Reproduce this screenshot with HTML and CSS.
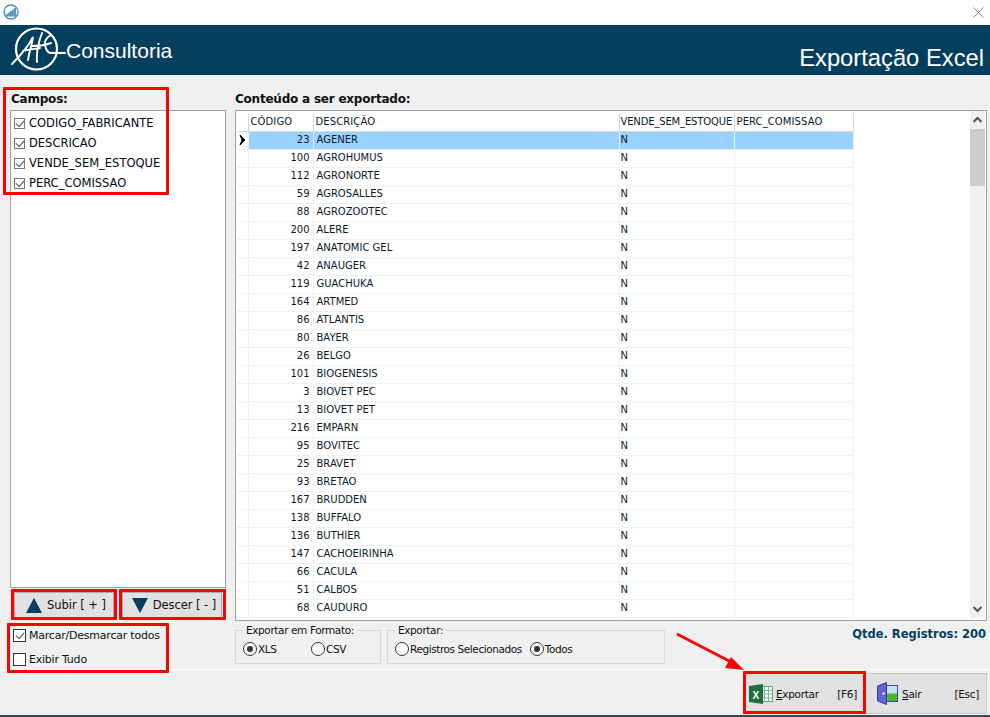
FILE: index.html
```html
<!DOCTYPE html>
<html lang="pt">
<head>
<meta charset="utf-8">
<title>Exportação Excel</title>
<link rel="stylesheet" href="styles.css">
</head>
<body>
<div class="app">
  <div class="titlebar">
    <svg class="appicon" width="16" height="16" viewBox="0 0 16 16"><circle cx="8" cy="8" r="7" fill="#fff" stroke="#3a93c4" stroke-width="1.300"/><path d="M4 12.500V10M6 12.500V8.500M8 12.500V7M10 12.500V5.500M12 12.500V4" stroke="#1c6ea4" stroke-width="1.400"/></svg>
    <svg class="closeicon" width="11" height="11" viewBox="0 0 11 11"><path d="M.5.5l10 10M10.500.5l-10 10" stroke="#8a8a8a" fill="none"/></svg>
  </div>
  <header class="header">
    <div class="brand">
      <svg class="logo" width="55" height="50" viewBox="0 0 55 50" fill="none" stroke="#fff" stroke-linecap="round"><circle cx="25.500" cy="24" r="20.500" stroke-width="2.200"/><path d="M1 39C9 31 17 22 22 12c-1 8-4 15-5 23M12 26c6-2 12-2 17-3M31 8c-3 8-6 18-5 29M21 21c8 0 14-1 19-3" stroke-width="1.900"/><path d="M40 10c-4 2-7 6-6 10 1 5 3 8 6 8h14" stroke-width="1.900"/></svg>
      <span class="brandname">Consultoria</span>
    </div>
    <h1 class="pagetitle">Exportação Excel</h1>
  </header>
  <main class="content">
    <section class="leftcol">
      <div class="label">Campos:</div>
      <ul class="fields">
        <li class="field"><span class="check flat on"></span>CODIGO_FABRICANTE</li>
        <li class="field"><span class="check flat on"></span>DESCRICAO</li>
        <li class="field"><span class="check flat on"></span>VENDE_SEM_ESTOQUE</li>
        <li class="field"><span class="check flat on"></span>PERC_COMISSAO</li>
      </ul>
      <div class="movebtns">
        <button class="movebtn"><span class="tri up"></span>Subir [ + ]</button>
        <button class="movebtn"><span class="tri down"></span>Descer [ - ]</button>
      </div>
      <div class="checks">
        <div class="checkrow"><span class="check on"></span>Marcar/Desmarcar todos</div>
        <div class="checkrow"><span class="check"></span>Exibir Tudo</div>
      </div>
    </section>
    <section class="rightcol">
      <div class="label">Conteúdo a ser exportado:</div>
      <div class="gridbox">
        <table class="grid">
          <colgroup><col class="c0"><col class="c1"><col class="c2"><col class="c3"><col class="c4"></colgroup>
          <thead><tr><th></th><th>CÓDIGO</th><th>DESCRIÇÃO</th><th>VENDE_SEM_ESTOQUE</th><th>PERC_COMISSAO</th></tr></thead>
          <tbody>
            <tr class="sel"><td class="ind"><svg width="8" height="10" viewBox="0 0 8 10"><path d="M1 0l5 5-5 5 2-5z" fill="#000" stroke="#000"/></svg></td><td class="num">23</td><td>AGENER</td><td>N</td><td></td></tr>
            <tr><td class="ind"></td><td class="num">100</td><td>AGROHUMUS</td><td>N</td><td></td></tr>
            <tr><td class="ind"></td><td class="num">112</td><td>AGRONORTE</td><td>N</td><td></td></tr>
            <tr><td class="ind"></td><td class="num">59</td><td>AGROSALLES</td><td>N</td><td></td></tr>
            <tr><td class="ind"></td><td class="num">88</td><td>AGROZOOTEC</td><td>N</td><td></td></tr>
            <tr><td class="ind"></td><td class="num">200</td><td>ALERE</td><td>N</td><td></td></tr>
            <tr><td class="ind"></td><td class="num">197</td><td>ANATOMIC GEL</td><td>N</td><td></td></tr>
            <tr><td class="ind"></td><td class="num">42</td><td>ANAUGER</td><td>N</td><td></td></tr>
            <tr><td class="ind"></td><td class="num">119</td><td>GUACHUKA</td><td>N</td><td></td></tr>
            <tr><td class="ind"></td><td class="num">164</td><td>ARTMED</td><td>N</td><td></td></tr>
            <tr><td class="ind"></td><td class="num">86</td><td>ATLANTIS</td><td>N</td><td></td></tr>
            <tr><td class="ind"></td><td class="num">80</td><td>BAYER</td><td>N</td><td></td></tr>
            <tr><td class="ind"></td><td class="num">26</td><td>BELGO</td><td>N</td><td></td></tr>
            <tr><td class="ind"></td><td class="num">101</td><td>BIOGENESIS</td><td>N</td><td></td></tr>
            <tr><td class="ind"></td><td class="num">3</td><td>BIOVET PEC</td><td>N</td><td></td></tr>
            <tr><td class="ind"></td><td class="num">13</td><td>BIOVET PET</td><td>N</td><td></td></tr>
            <tr><td class="ind"></td><td class="num">216</td><td>EMPARN</td><td>N</td><td></td></tr>
            <tr><td class="ind"></td><td class="num">95</td><td>BOVITEC</td><td>N</td><td></td></tr>
            <tr><td class="ind"></td><td class="num">25</td><td>BRAVET</td><td>N</td><td></td></tr>
            <tr><td class="ind"></td><td class="num">93</td><td>BRETAO</td><td>N</td><td></td></tr>
            <tr><td class="ind"></td><td class="num">167</td><td>BRUDDEN</td><td>N</td><td></td></tr>
            <tr><td class="ind"></td><td class="num">138</td><td>BUFFALO</td><td>N</td><td></td></tr>
            <tr><td class="ind"></td><td class="num">136</td><td>BUTHIER</td><td>N</td><td></td></tr>
            <tr><td class="ind"></td><td class="num">147</td><td>CACHOEIRINHA</td><td>N</td><td></td></tr>
            <tr><td class="ind"></td><td class="num">66</td><td>CACULA</td><td>N</td><td></td></tr>
            <tr><td class="ind"></td><td class="num">51</td><td>CALBOS</td><td>N</td><td></td></tr>
            <tr><td class="ind"></td><td class="num">68</td><td>CAUDURO</td><td>N</td><td></td></tr>
          </tbody>
        </table>
        <div class="scrollbar">
          <svg class="arrow-btn" width="15" height="18" viewBox="0 0 15 18"><path d="M3.500 11l4-4 4 4" fill="none" stroke="#555" stroke-width="2"/></svg>
          <div class="thumb"></div>
          <svg class="arrow-btn bottom" width="15" height="18" viewBox="0 0 15 18"><path d="M3.500 7l4 4 4-4" fill="none" stroke="#555" stroke-width="2"/></svg>
        </div>
      </div>
      <div class="options">
        <fieldset class="group fmt">
          <legend>Exportar em Formato:</legend>
          <label class="radio fmt-a"><span class="dot on"></span>XLS</label>
          <label class="radio"><span class="dot"></span>CSV</label>
        </fieldset>
        <fieldset class="group scope">
          <legend>Exportar:</legend>
          <label class="radio scope-a"><span class="dot"></span>Registros Selecionados</label>
          <label class="radio"><span class="dot on"></span>Todos</label>
        </fieldset>
        <div class="count">Qtde. Registros: 200</div>
      </div>
    </section>
  </main>
  <footer class="footer">
    <button class="action">
      <svg class="xlicon" width="24" height="20" viewBox="0 0 24 20"><rect x="11.500" y="2.500" width="12" height="15" fill="#fff" stroke="#5f9f7c"/><path d="M15.500 2.500v15M19.500 2.500v15M11.500 6.500h12M11.500 10h12M11.500 14h12" stroke="#7fb597"/><path d="M0 2L14 0v20L0 18z" fill="#1d6f42"/><text x="3.500" y="14.500" class="xl">X</text></svg>
      <span class="actname"><u>E</u>xportar</span><span class="key">[F6]</span>
    </button>
    <button class="action">
      <svg class="dooricon" width="21" height="23" viewBox="0 0 21 23"><rect x="7.500" y="3.500" width="13" height="16" fill="#bfe6ee" stroke="#3f4d9b"/><rect x="9" y="11.500" width="11" height="7.500" fill="#4cb52e"/><path d="M.5 4L9.500.5v22L.5 19z" fill="#6463d6" stroke="#3b3a9a"/><circle cx="6.500" cy="11.500" r="1.200" fill="#e8ecff"/></svg>
      <span class="actname"><u>S</u>air</span><span class="key">[Esc]</span>
    </button>
  </footer>
  <div class="baseline"></div>
  <div class="mark m-campos"></div>
  <div class="mark m-sub"></div>
  <div class="mark m-des"></div>
  <div class="mark m-checks"></div>
  <div class="mark m-exp"></div>
  <svg class="red-arrow" width="80" height="50" viewBox="0 0 80 50"><path d="M2 2L58 31" stroke="#f00" stroke-width="3" fill="none"/><path d="M69 38L50 36l6-11z" fill="#f00"/></svg>
</div>
</body>
</html>
```
FILE: styles.css
```css
* { box-sizing: border-box; }
html, body { margin: 0; padding: 0; }
body { font-family: "DejaVu Sans", Tahoma, sans-serif; font-size: 10.5px; color: #111; background: #f0f0f0; }
.app { position: relative; width: 990px; height: 717px; overflow: hidden; display: flex; flex-direction: column; }

.titlebar { height: 25px; background: #fff; display: flex; align-items: center; justify-content: space-between; padding: 0 6px 1px 3px; flex: none; }
.appicon { display: block; }
.closeicon { display: block; }

.header { height: 50px; flex: none; background: #053f5e; color: #fff; display: flex; justify-content: space-between; font-family: "Liberation Sans", Arial, sans-serif; }
.brand { display: flex; align-items: center; padding-left: 11px; }
.logo { display: block; flex: none; }
.brandname { font-size: 21px; margin-top: 2px; }
.pagetitle { margin: 19px 6px 0 0; font-size: 23.750px; line-height: 28px; font-weight: 400; }

.content { height: 594px; flex: none; display: flex; padding-left: 10px; }
.leftcol { width: 216px; flex: none; display: flex; flex-direction: column; }
.rightcol { width: 752px; flex: none; margin-left: 9px; display: flex; flex-direction: column; }
.label { height: 35px; flex: none; display: flex; align-items: flex-end; font-weight: 700; font-size: 12px; line-height: 16px; padding: 0 0 3px 1px; letter-spacing: -.22px; }
.rightcol .label { padding-left: 0; }

.fields { list-style: none; margin: 0; padding: 2px 0 0 3px; height: 478px; flex: none; background: #fff; border: 1px solid #a0a0a0; }
.field { height: 20px; display: flex; align-items: center; gap: 4px; color: #000814; font-size: 11.500px; }

.check { width: 13px; height: 13px; flex: none; background: #fff; border: 1px solid #333; display: block; position: relative; }
.check.flat { width: 11px; height: 11px; border-color: #777; }
.check.on::after { content: ""; position: absolute; left: 2px; top: 0; width: 7px; height: 4px; border-left: 1.500px solid #555; border-bottom: 1.500px solid #555; transform: translate(0, 2px) rotate(-48deg); }
.check.flat.on::after { left: 1px; top: -1px; }

.movebtns { display: flex; justify-content: space-between; padding: 4px 4px 0; flex: none; }
.movebtn { width: 100px; height: 26px; border: 1px solid #adadad; background: #e1e1e1; font: inherit; font-size: 11.500px; color: #111; display: flex; align-items: center; justify-content: center; gap: 5px; padding: 0 0 0 4px; letter-spacing: -.05px; }
.tri { width: 0; height: 0; border-left: 8.500px solid transparent; border-right: 8.500px solid transparent; display: block; }
.tri.up { border-bottom: 15px solid #053f5e; }
.tri.down { border-top: 15px solid #053f5e; }

.checks { padding: 5px 0 0 3px; flex: none; }
.checkrow { height: 24px; display: flex; align-items: center; gap: 3px; font-size: 11px; letter-spacing: -.22px; }

.gridbox { height: 511px; flex: none; background: #fff; border: 1px solid #a0a0a0; position: relative; padding: 2px 0 0 1px; overflow: hidden; }
.grid { border-collapse: collapse; table-layout: fixed; width: 616px; }
.c0 { width: 11px; } .c1 { width: 65px; } .c2 { width: 306px; } .c3 { width: 115px; } .c4 { width: 119px; }
.grid th, .grid td { height: 18px; padding: 0 2px; font-weight: 400; text-align: left; border-right: 1px solid #f0f0f0; border-bottom: 1px solid #f0f0f0; white-space: nowrap; line-height: 14px; font-size: 10px; color: #0a1a2a; }
.grid th { border-bottom: 1px solid #d8d8d8; border-right: 1px solid #d8d8d8; letter-spacing: .1px; }
.grid th:nth-child(4) { padding-left: 1px; letter-spacing: -.15px; }
.grid td { padding-left: 3px; }
.grid td:nth-child(4) { padding-left: 1px; }
.grid td.num { text-align: right; padding-right: 3px; }
.grid td.ind { padding: 0 0 0 2px; }
.ind svg { display: block; }
.sel td { background: #99d1ff; border-right-color: #e6f3ff; }
.sel td.ind { background: #fff; border-right-color: #f0f0f0; }

.scrollbar { position: absolute; top: 0; right: 1px; width: 15px; bottom: 2px; background: #f0f0f0; }
.arrow-btn { display: block; }
.arrow-btn.bottom { position: absolute; bottom: 0; left: 0; }
.thumb { height: 57px; background: #cdcdcd; }

.options { display: flex; flex: none; align-items: flex-start; }
.group { margin: 0; border: 1px solid #d9d9d9; padding: 0 0 0 7px; height: 40px; display: flex; align-items: center; }
.group legend { padding: 0 3px; margin-left: 0; font-size: 10.500px; line-height: 13px; letter-spacing: -.38px; }
.fmt { width: 146px; margin-top: 3px; padding-bottom: 3px; }
.scope { width: 278px; margin: 3px 0 0 6px; padding-bottom: 3px; }
.radio { display: flex; align-items: center; gap: 1px; font-size: 10.500px; letter-spacing: -.42px; }
.fmt-a { width: 68px; }
.scope-a { margin-right: 8px; }
.dot { width: 14px; height: 14px; border-radius: 50%; border: 1px solid #333; background: #fff; display: block; position: relative; flex: none; }
.dot.on::after { content: ""; position: absolute; left: 3px; top: 3px; width: 6px; height: 6px; border-radius: 50%; background: #333; }
.count { margin-left: auto; margin-top: 6px; padding-right: 1px; font-weight: 700; font-size: 11.500px; color: #053f5e; white-space: nowrap; }

.footer { height: 46px; flex: none; border-top: 1px solid #fff; display: flex; justify-content: flex-end; padding: 3px 3px 0 0; background: #f0f0f0; }
.action { width: 122px; height: 41px; border: 1px solid #c8c8c8; background: #e1e1e1; font: inherit; font-size: 10.500px; color: #111; display: flex; align-items: center; padding: 0 7px 0 5px; letter-spacing: -.3px; }
.actname { margin-left: 3px; }
.dooricon { margin-left: 6px; margin-right: 1px; }
.key { margin-left: auto; }
.xl { font: 700 10px "Liberation Sans", sans-serif; fill: #fff; }
.baseline { flex: 1; background: #3a4a55; }

.mark { position: absolute; border: 3px solid #f00; border-radius: 1px; }
.m-campos { left: 3px; top: 87px; width: 166px; height: 108px; }
.m-sub { left: 11px; top: 589px; width: 106px; height: 31px; }
.m-des { left: 119px; top: 589px; width: 107px; height: 31px; }
.m-checks { left: 7px; top: 623px; width: 162px; height: 50px; }
.m-exp { left: 743px; top: 671px; width: 123px; height: 43px; }
.red-arrow { position: absolute; left: 675px; top: 632px; }
```
